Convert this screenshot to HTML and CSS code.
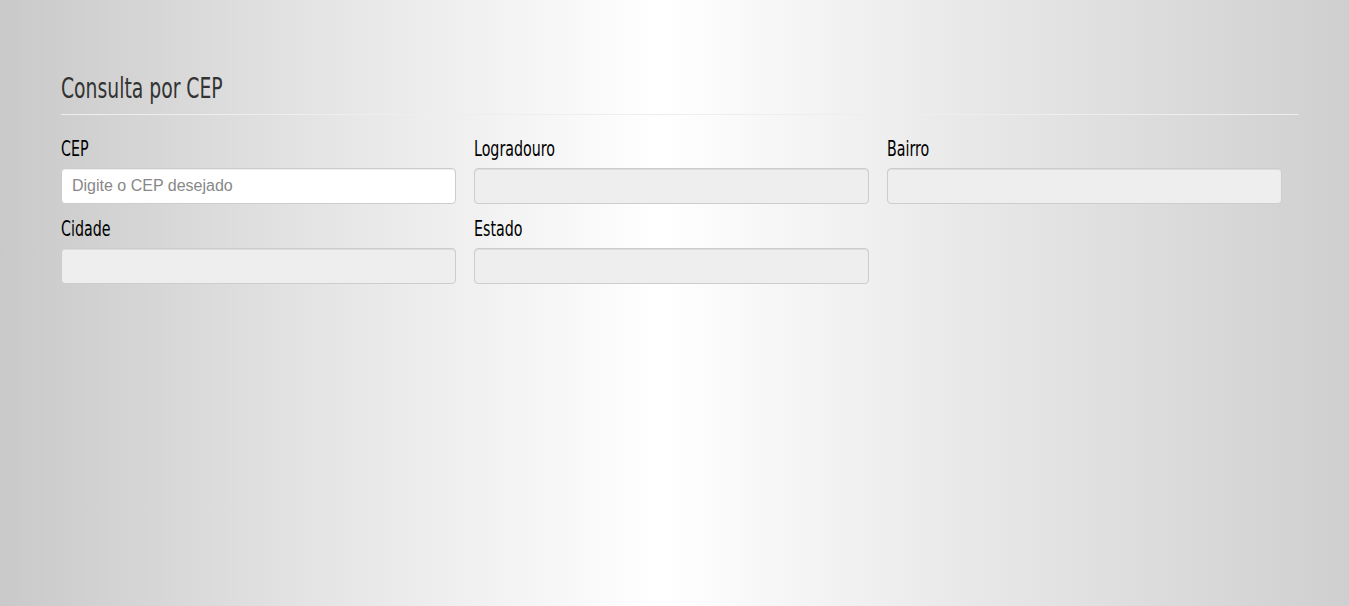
FILE: index.html
```html
<!DOCTYPE html>
<html lang="pt-BR">
<head>
<meta charset="utf-8">
<title>Consulta por CEP</title>
<link rel="stylesheet" href="styles.css">
</head>
<body>
<div class="container">
  <h2 class="title"><span class="narrow">Consulta por CEP</span></h2>
  <hr class="divider">
  <form class="grid">
    <div class="field">
      <label class="label" for="cep"><span class="narrow">CEP</span></label>
      <input class="input" id="cep" type="text" placeholder="Digite o CEP desejado">
    </div>
    <div class="field">
      <label class="label" for="logradouro"><span class="narrow">Logradouro</span></label>
      <input class="input" id="logradouro" type="text" disabled>
    </div>
    <div class="field">
      <label class="label" for="bairro"><span class="narrow">Bairro</span></label>
      <input class="input" id="bairro" type="text" disabled>
    </div>
    <div class="field">
      <label class="label" for="cidade"><span class="narrow">Cidade</span></label>
      <input class="input" id="cidade" type="text" disabled>
    </div>
    <div class="field">
      <label class="label" for="estado"><span class="narrow">Estado</span></label>
      <input class="input" id="estado" type="text" disabled>
    </div>
  </form>
</div>
</body>
</html>
```
FILE: styles.css
```css
html, body {
  margin: 0;
  height: 100%;
}
body {
  background: linear-gradient(to right, #c9c9c9 0%, #e6e6e6 25%, #ffffff 49%, #e8e8e8 72%, #cfcfcf 100%);
  font-family: "DejaVu Sans Condensed", "DejaVu Sans", sans-serif;
  font-stretch: condensed;
}
.container {
  width: 1238px;
  margin-left: 61px;
  padding-top: 70px;
}
.narrow {
  display: inline-block;
  transform: scaleX(0.72);
  transform-origin: left center;
  white-space: nowrap;
}
.title {
  margin: 0;
  font-size: 29px;
  font-weight: normal;
  color: #333;
  line-height: 36px;
}
.divider {
  border: 0;
  border-top: 1px solid #eee;
  height: 0;
  margin: 8px 0 22px;
}
.grid {
  display: grid;
  grid-template-columns: repeat(3, 413px);
  row-gap: 13px;
}
.field {
  display: flex;
  flex-direction: column;
  padding-right: 18px;
}
.label {
  display: block;
  font-size: 22px;
  line-height: 24px;
  color: #000;
  margin-bottom: 7px;
}
.input {
  box-sizing: border-box;
  height: 36px;
  border: 1px solid #ccc;
  border-radius: 4px;
  background: #fff;
  padding: 6px 10px;
  font-family: "Liberation Sans", Arial, sans-serif;
  font-stretch: normal;
  font-size: 16px;
  color: #555;
  box-shadow: inset 0 1px 1px rgba(0,0,0,0.075);
}
.input::placeholder {
  color: #888;
}
.input:disabled {
  background: #eee;
  opacity: 1;
}
```
